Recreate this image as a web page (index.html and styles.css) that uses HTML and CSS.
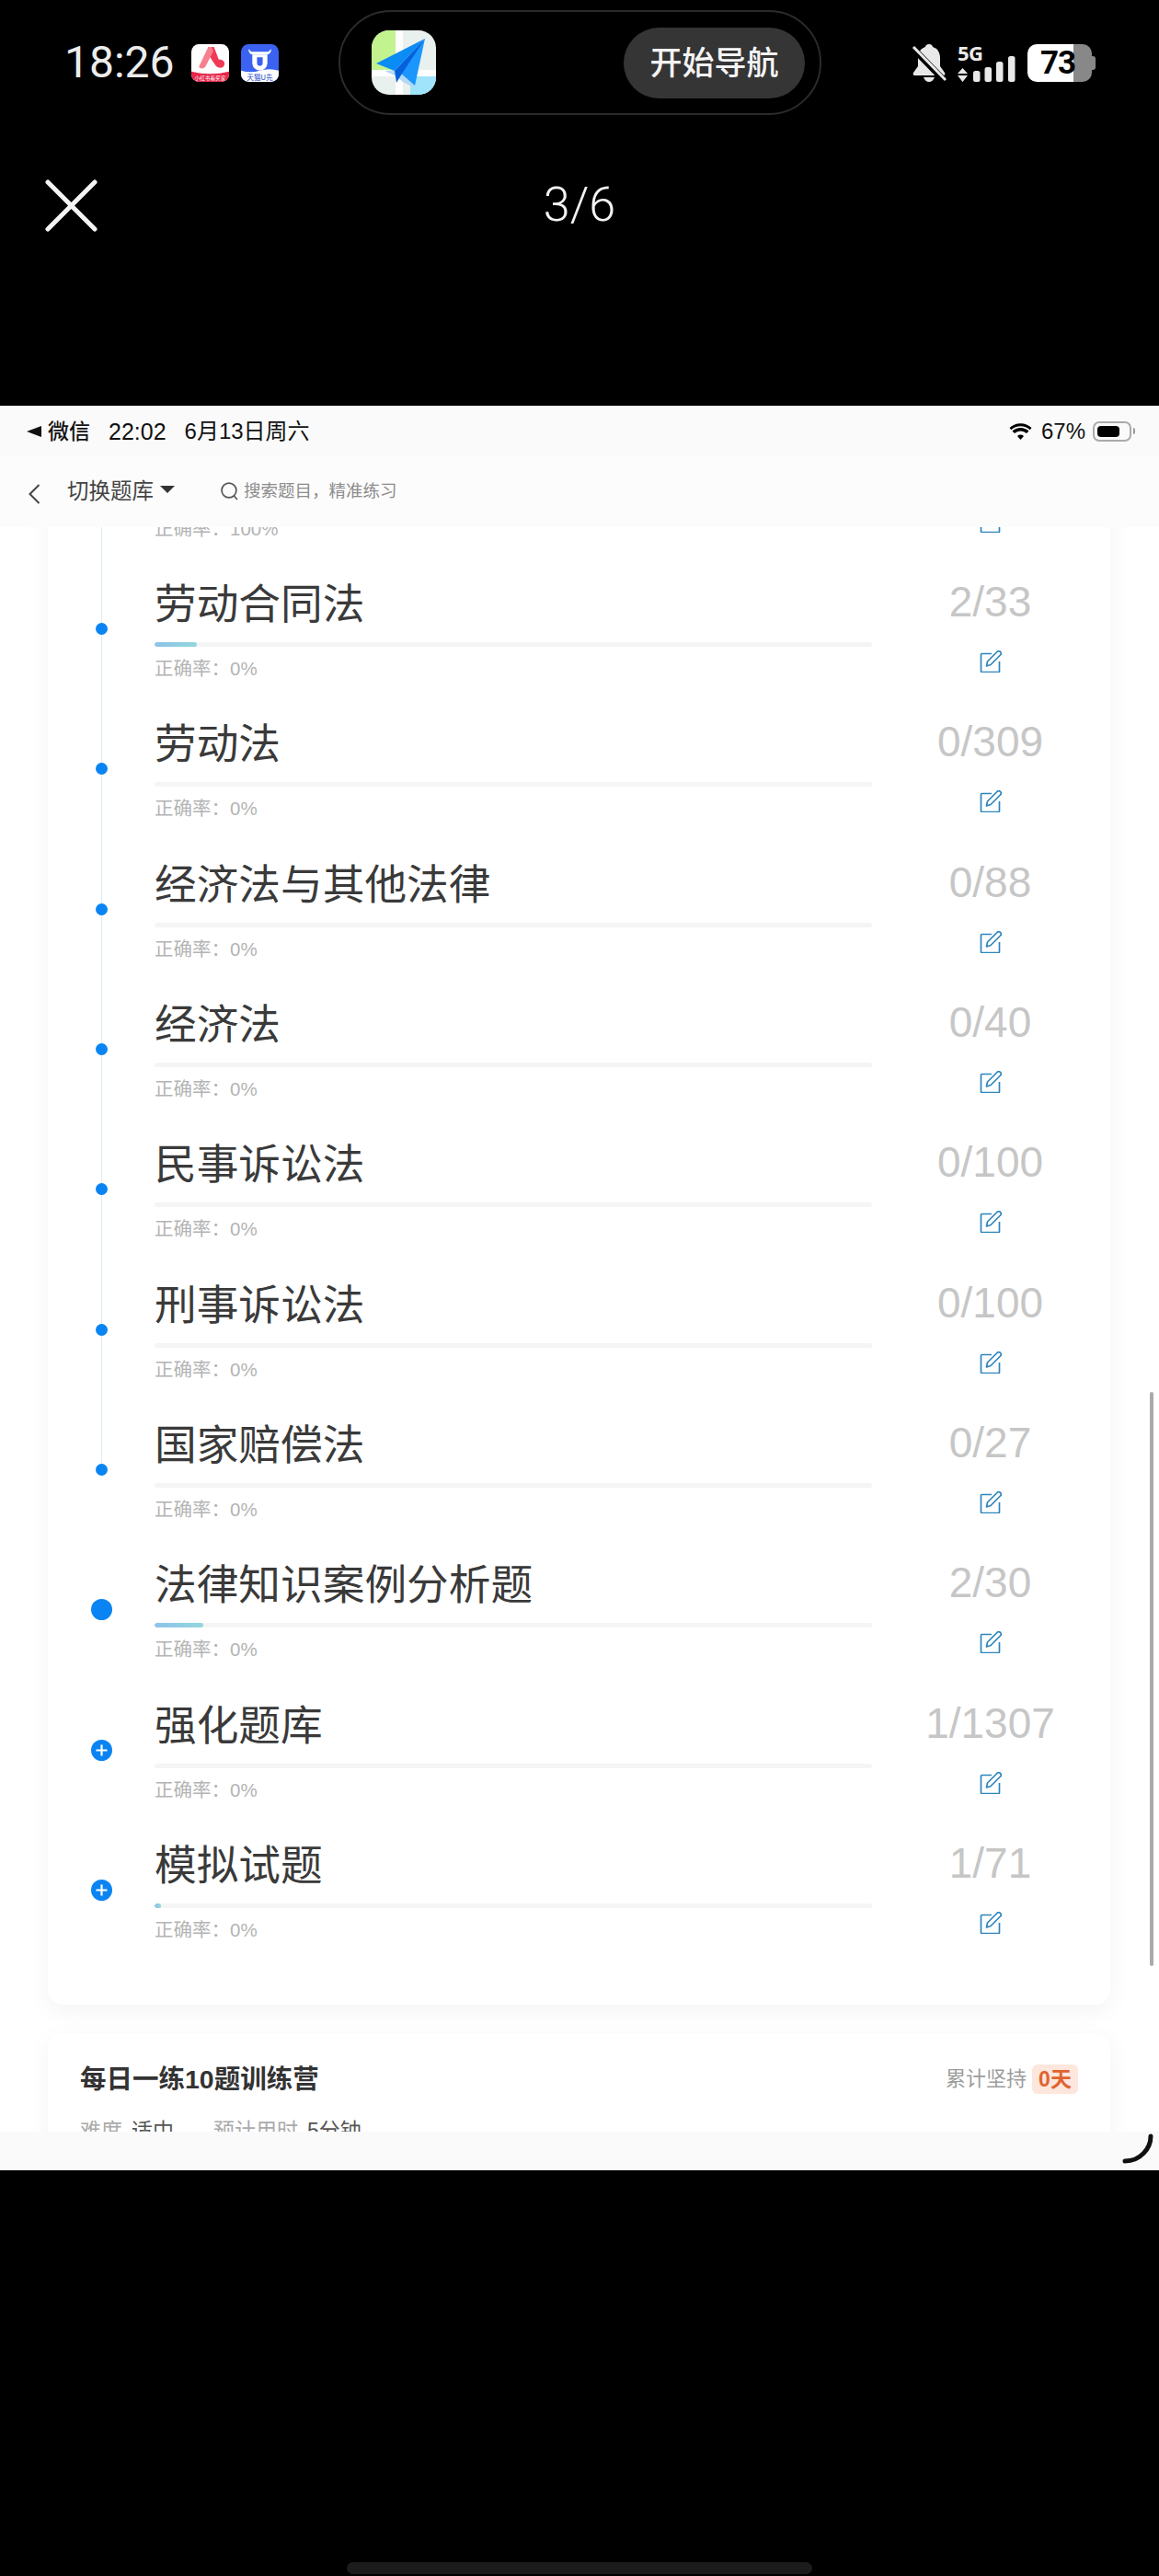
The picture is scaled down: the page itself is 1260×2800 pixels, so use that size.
FILE: index.html
```html
<!DOCTYPE html>
<html lang="zh-CN">
<head>
<meta charset="utf-8">
<title>题库</title>
<link rel="stylesheet" href="styles.css">
</head>
<body>
<svg class="defs" aria-hidden="true">
  <symbol id="i-edit" viewBox="0 0 24 24">
    <path d="M13 3.500H2.500a1 1 0 0 0-1 1v18a1 1 0 0 0 1 1h18a1 1 0 0 0 1-1V12" fill="none" stroke="#2f86bd" stroke-width="1.700"/>
    <path d="M7.500 17l1-5L19 1.500a2 2 0 0 1 3.500 3.500L12 15.500z" fill="none" stroke="#2f86bd" stroke-width="1.700" stroke-linejoin="round"/>
  </symbol>
  <symbol id="i-plus" viewBox="0 0 23 23">
    <circle cx="11.500" cy="11.500" r="11.500" fill="#0a84f2"/>
    <path d="M11.500 5.500v12M5.500 11.500h12" stroke="#fff" stroke-width="2.200"/>
  </symbol>
</svg>
<header class="top">
  <div class="status">
    <span class="clock">18:26</span>
    <svg class="app" viewBox="0 0 40 40"><rect width="40" height="40" rx="8" fill="#fff"/><path d="M0 29q20 5 40 0v3a8 8 0 0 1-8 8H8a8 8 0 0 1-8-8z" fill="#e8274b"/><path d="M18 3h6l5 13c5 0 7 3 6 6-1 4-6 4-9 1l-4-6-5-8z" fill="#f03a55"/><path d="M18 3 8 24c2 3 5 2 7 0l8-16-1-5z" fill="#f7808e"/><text x="20" y="38" class="app-label" text-anchor="middle">小红书看买家</text></svg>
    <svg class="app app-second" viewBox="0 0 40 40"><rect width="40" height="40" rx="8" fill="#3b62f0"/><path d="M0 28q10 3 20 0t20 0v4a8 8 0 0 1-8 8H8a8 8 0 0 1-8-8z" fill="#fff"/><path d="M8 5c0 4 2 6 5 6h14c3 0 5-2 5-6l-3 3H11z" fill="#fff"/><path d="M12 11h16v9a8 8 0 0 1-16 0zm5 3v6a3 3 0 0 0 6 0v-6z" fill="#fff" fill-rule="evenodd"/><text x="20" y="38" class="app-label app-label-blue" text-anchor="middle">天猫U先</text></svg>
    <div class="island">
      <svg class="map" viewBox="0 0 70 70">
        <defs><clipPath id="sq"><rect width="70" height="70" rx="19"/></clipPath></defs>
        <g clip-path="url(#sq)">
          <rect width="70" height="70" fill="#e9f1ef"/>
          <rect width="26" height="43" fill="#c3f38f"/>
          <rect x="42" y="46" width="28" height="24" fill="#9fe4fb"/>
          <rect x="26" width="8" height="70" fill="#fff"/>
          <rect y="43" width="70" height="7" fill="#fff"/>
          <path d="M14 44 40 42 47 63 34 56 27 50z" fill="#b4d8f5"/>
          <path d="M58 9 5 36 25 44z" fill="#0b8cf5"/>
          <path d="M58 9 31 46 47 60z" fill="#1a96fd"/>
          <path d="M58 9 25 44 27 57 33 47z" fill="#0560dc"/>
        </g>
      </svg>
      <span class="nav-btn">开始导航</span>
    </div>
    <div class="indicators">
      <svg class="bell" viewBox="0 0 38 41"><path d="M19 0c2.500 0 4 1.500 4 3 5 1.500 8 6 8 12v9l5 7c.8 1.500 0 3-1.500 3h-31C2 34 1.200 32.500 2 31l5-7v-9c0-6 3-10.500 8-12 0-1.500 1.500-3 4-3zM13 36h12c-1 3-3.500 5-6 5s-5-2-6-5z" fill="#e9e9e9"/><path d="M1 4 36 40" stroke="#000" stroke-width="7"/><path d="M2 3 37 39" stroke="#e9e9e9" stroke-width="3"/></svg>
      <div class="net">
        <span class="net-label">5G</span>
        <svg class="signal" viewBox="0 0 63 28"><path d="M5.500 13 11 19H0zM5.500 28 0 21h11z" fill="#e9e9e9"/><rect x="17" y="16" width="7.500" height="12" rx="2.500" fill="#e9e9e9"/><rect x="29.500" y="12" width="7.500" height="16" rx="2.500" fill="#e9e9e9"/><rect x="42" y="6" width="7.500" height="22" rx="2.500" fill="#e9e9e9"/><rect x="55" y="0" width="7.500" height="28" rx="2.500" fill="#e9e9e9"/></svg>
      </div>
      <div class="battery"><span class="battery-num">73</span></div>
    </div>
  </div>
  <div class="viewer">
    <svg class="close" viewBox="0 0 57 57"><path d="M3 3 54 54M54 3 3 54" stroke="#f4f4f4" stroke-width="5" stroke-linecap="round"/></svg>
    <span class="pager">3/6</span>
  </div>
</header>

<main class="screen">
  <div class="sys">
    <span class="back-tri"></span>
    <span class="sys-text sys-app">微信</span>
    <span class="sys-text sys-time">22:02</span>
    <span class="sys-text sys-date">6月13日周六</span>
    <svg class="wifi" viewBox="0 0 24 18"><path d="M12 18 8.500 14a5 5 0 0 1 7 0zM5.500 11 3 8.500a13 13 0 0 1 18 0L18.500 11a9.500 9.500 0 0 0-13 0zM1.800 7.200 0 5a17.500 17.500 0 0 1 24 0l-1.800 2.200a15 15 0 0 0-20.400 0z" fill="#000"/></svg>
    <span class="sys-text sys-pct">67%</span>
    <span class="sys-batt"><span class="sys-batt-fill"></span></span>
    <span class="sys-nub"></span>
  </div>
  <nav class="nav">
    <svg class="chev" viewBox="0 0 13 22"><path d="M11.500 1 1.500 11l10 10" fill="none" stroke="#444" stroke-width="2"/></svg>
    <span class="bank">切换题库</span>
    <span class="bank-tri"></span>
    <svg class="search" viewBox="0 0 19 19"><circle cx="8.500" cy="8.500" r="7.500" fill="none" stroke="#555" stroke-width="1.600"/><path d="M13.500 14 17 18" stroke="#555" stroke-width="1.600"/></svg>
    <span class="search-text">搜索题目，精准练习</span>
  </nav>

  <div class="scroll">
    <div class="scroll-inner">
      <section class="card">
        <div class="row">
          <div class="axis line"><span class="dot"></span></div>
          <div class="main"><h3 class="title">合同法</h3><div class="track"></div><p class="rate">正确率：100%</p></div>
          <div class="side"><span class="count">1/1</span><svg class="edit"><use href="#i-edit"/></svg></div>
        </div>
        <div class="row">
          <div class="axis line"><span class="dot"></span></div>
          <div class="main"><h3 class="title">劳动合同法</h3><div class="track"><div class="fill" style="width:46px"></div></div><p class="rate">正确率：0%</p></div>
          <div class="side"><span class="count">2/33</span><svg class="edit"><use href="#i-edit"/></svg></div>
        </div>
        <div class="row">
          <div class="axis line"><span class="dot"></span></div>
          <div class="main"><h3 class="title">劳动法</h3><div class="track"></div><p class="rate">正确率：0%</p></div>
          <div class="side"><span class="count">0/309</span><svg class="edit"><use href="#i-edit"/></svg></div>
        </div>
        <div class="row">
          <div class="axis line"><span class="dot"></span></div>
          <div class="main"><h3 class="title">经济法与其他法律</h3><div class="track"></div><p class="rate">正确率：0%</p></div>
          <div class="side"><span class="count">0/88</span><svg class="edit"><use href="#i-edit"/></svg></div>
        </div>
        <div class="row">
          <div class="axis line"><span class="dot"></span></div>
          <div class="main"><h3 class="title">经济法</h3><div class="track"></div><p class="rate">正确率：0%</p></div>
          <div class="side"><span class="count">0/40</span><svg class="edit"><use href="#i-edit"/></svg></div>
        </div>
        <div class="row">
          <div class="axis line"><span class="dot"></span></div>
          <div class="main"><h3 class="title">民事诉讼法</h3><div class="track"></div><p class="rate">正确率：0%</p></div>
          <div class="side"><span class="count">0/100</span><svg class="edit"><use href="#i-edit"/></svg></div>
        </div>
        <div class="row">
          <div class="axis line"><span class="dot"></span></div>
          <div class="main"><h3 class="title">刑事诉讼法</h3><div class="track"></div><p class="rate">正确率：0%</p></div>
          <div class="side"><span class="count">0/100</span><svg class="edit"><use href="#i-edit"/></svg></div>
        </div>
        <div class="row">
          <div class="axis line-end"><span class="dot"></span></div>
          <div class="main"><h3 class="title">国家赔偿法</h3><div class="track"></div><p class="rate">正确率：0%</p></div>
          <div class="side"><span class="count">0/27</span><svg class="edit"><use href="#i-edit"/></svg></div>
        </div>
        <div class="row">
          <div class="axis"><span class="dot dot-big"></span></div>
          <div class="main"><h3 class="title">法律知识案例分析题</h3><div class="track"><div class="fill" style="width:53px"></div></div><p class="rate">正确率：0%</p></div>
          <div class="side"><span class="count">2/30</span><svg class="edit"><use href="#i-edit"/></svg></div>
        </div>
        <div class="row">
          <div class="axis"><svg class="plus"><use href="#i-plus"/></svg></div>
          <div class="main"><h3 class="title">强化题库</h3><div class="track"></div><p class="rate">正确率：0%</p></div>
          <div class="side"><span class="count">1/1307</span><svg class="edit"><use href="#i-edit"/></svg></div>
        </div>
        <div class="row">
          <div class="axis"><svg class="plus"><use href="#i-plus"/></svg></div>
          <div class="main"><h3 class="title">模拟试题</h3><div class="track"><div class="fill" style="width:7px"></div></div><p class="rate">正确率：0%</p></div>
          <div class="side"><span class="count">1/71</span><svg class="edit"><use href="#i-edit"/></svg></div>
        </div>
      </section>
      <section class="card camp">
        <div class="camp-head">
          <h2 class="camp-title">每日一练10题训练营</h2>
          <span class="streak">累计坚持</span>
          <span class="badge">0天</span>
        </div>
        <div class="camp-meta">
          <span class="meta-key">难度</span><span class="meta-val">适中</span>
          <span class="meta-key meta-gap">预计用时</span><span class="meta-val">5分钟</span>
        </div>
      </section>
    </div>
  </div>
  <div class="tabbar"></div>
  <div class="scrollbar"></div>
  <svg class="corner" viewBox="0 0 34 34"><path d="M31 3c0 13-11 27-28 27" fill="none" stroke="#111" stroke-width="5" stroke-linecap="round"/></svg>
</main>

<footer class="foot"><div class="home"></div></footer>
</body>
</html>
```

FILE: styles.css
```css
* { box-sizing: border-box; }
html, body { margin: 0; padding: 0; }
body {
  width: 1260px;
  height: 2800px;
  overflow: hidden;
  background: #000;
  display: flex;
  flex-direction: column;
  font-family: "Liberation Sans", "Noto Sans CJK SC", sans-serif;
}
.defs { width: 0; height: 0; position: absolute; }

/* phone top */
.top { height: 441px; flex: none; padding-top: 11px; }
.status {
  display: flex;
  align-items: center;
  height: 114px;
  padding-left: 70px;
}
.clock {
  width: 119px;
  margin-right: 19px;
  font: 400 48px/1 Roboto, sans-serif;
  color: #ececec;
  white-space: nowrap;
}
.app { width: 41px; height: 41px; flex: none; }
.app-second { margin-left: 13px; }
.app-label { font: 5.500px "Noto Sans CJK SC", sans-serif; fill: #fff; }
.app-label-blue { font-size: 7.500px; fill: #2346c8; }
.island {
  width: 525px;
  height: 114px;
  margin-left: 65px;
  padding: 0 16px 0 34px;
  border: 2px solid #2b2b2b;
  border-radius: 57px;
  display: flex;
  align-items: center;
  justify-content: space-between;
}
.map { width: 70px; height: 70px; }
.nav-btn {
  width: 197px;
  height: 77px;
  border-radius: 39px;
  background: #353535;
  color: #f4f4f4;
  font: 500 35px/72px "Noto Sans CJK SC", sans-serif;
  text-align: center;
}
.indicators {
  display: flex;
  align-items: center;
  margin-left: 98px;
}
.bell { width: 38px; height: 41px; }
.net {
  width: 63px;
  height: 41px;
  margin-left: 12px;
  position: relative;
}
.net-label {
  position: absolute;
  left: 0;
  top: 0;
  font: 700 22px/18px "Open Sans", sans-serif;
  letter-spacing: -.5px;
  color: #e9e9e9;
}
.signal { position: absolute; left: 0; bottom: 0; width: 63px; height: 28px; }
.battery {
  width: 70px;
  height: 41px;
  margin-left: 13px;
  border-radius: 10px;
  background: linear-gradient(90deg, #fff 0 50px, #888 50px);
  position: relative;
}
.battery::after {
  content: "";
  position: absolute;
  right: -4px;
  top: 13px;
  width: 4px;
  height: 15px;
  border-radius: 0 3px 3px 0;
  background: #888;
}
.battery-num {
  position: absolute;
  left: 14px;
  top: 0;
  font: 700 35px/41px Roboto, sans-serif;
  letter-spacing: -1px;
  color: #000;
}
.viewer {
  display: grid;
  grid-template-columns: 1fr auto 1fr;
  align-items: center;
  height: 57px;
  margin-top: 70px;
  padding: 0 49px;
}
.close { width: 57px; height: 57px; }
.pager {
  font: 300 52px/57px Roboto, sans-serif;
  color: #f4f4f4;
  position: relative;
  top: -1px;
}

/* embedded screenshot */
.screen {
  height: 1918px;
  flex: none;
  background: #fff;
  position: relative;
  display: flex;
  flex-direction: column;
  overflow: hidden;
}
.sys {
  height: 54px;
  flex: none;
  background: #fafafa;
  display: flex;
  align-items: center;
  padding-left: 29px;
  padding-top: 1px;
}
.back-tri {
  width: 0;
  height: 0;
  border-style: solid;
  border-width: 6px 16px 6px 0;
  border-color: transparent #111 transparent transparent;
}
.sys-text { font-size: 24px; line-height: 28px; color: #111; white-space: nowrap; }
.sys-app { font-size: 23px; margin-left: 7px; font-weight: 500; }
.sys-time { font-size: 25px; margin-left: 20px; }
.sys-date { margin-left: 20px; }
.wifi { width: 25px; height: 18px; margin-left: auto; }
.sys-pct { font-size: 24px; margin-left: 10px; }
.sys-batt {
  width: 42px;
  height: 22px;
  margin-left: 8px;
  padding: 3px;
  border: 2px solid #aaa;
  border-radius: 7px;
  display: block;
}
.sys-batt-fill { display: block; width: 24px; height: 100%; border-radius: 4px; background: #000; }
.sys-nub { width: 2px; height: 7px; margin-left: 2px; margin-right: 26px; background: #999; border-radius: 0 2px 2px 0; }
.nav {
  height: 78px;
  flex: none;
  background: #fcfcfc;
  display: flex;
  align-items: center;
  padding: 0 0 0 31px;
}
.chev { width: 13px; height: 22px; margin-top: 6px; }
.bank { margin-left: 29px; font-size: 23.500px; line-height: 30px; color: #444; white-space: nowrap; }
.bank-tri {
  width: 0;
  height: 0;
  margin-left: 7px;
  margin-bottom: 4px;
  border-style: solid;
  border-width: 8px 8px 0;
  border-color: #333 transparent transparent;
}
.search { width: 20px; height: 20px; margin-left: 50px; }
.search-text { margin-left: 5px; font-size: 18.500px; line-height: 24px; color: #8c8c8c; white-space: nowrap; }

.scroll { flex: 1; min-height: 0; overflow: hidden; background: #fff; }
.scroll-inner { margin-top: -114.330px; padding-left: 52px; }
.card {
  width: 1155px;
  background: #fff;
  border-radius: 0 0 16px 16px;
  box-shadow: 0 6px 26px rgba(0, 0, 0, .05);
  padding-bottom: 45px;
}
.row { display: flex; height: 152.330px; }
.axis {
  width: 116px;
  flex: none;
  position: relative;
  display: flex;
  justify-content: center;
  align-items: flex-start;
}
.line::before, .line-end::before {
  content: "";
  position: absolute;
  left: 58px;
  top: 0;
  bottom: 0;
  width: 1px;
  background: #dcecf6;
}
.line-end::before { bottom: 80px; }
.dot {
  width: 13px;
  height: 13px;
  margin-top: 66px;
  border-radius: 50%;
  background: #0a84f2;
  position: relative;
}
.dot-big { width: 23px; height: 23px; margin-top: 61px; }
.plus { width: 23px; height: 23px; margin-top: 61px; }
.main { width: 780px; flex: none; padding-top: 17px; }
.title { margin: 0; font-weight: 400; font-size: 45.700px; line-height: 60px; color: #3a3a3a; white-space: nowrap; }
.track { height: 5px; margin-top: 10px; border-radius: 3px; background: #f5f5f5; overflow: hidden; }
.fill { height: 100%; border-radius: 3px; background: linear-gradient(90deg, #8dc3ea, #93d6dd); }
.rate { margin: 9px 0 0; font-size: 20.500px; line-height: 30px; color: #b4b4b4; }
.side { flex: 1; display: flex; flex-direction: column; align-items: center; padding: 13px 2px 0 0; }
.count { font-size: 46px; line-height: 60px; color: #c6c6c6; white-space: nowrap; }
.edit { width: 24px; height: 24px; margin-top: 23px; }

.camp { margin-top: 31px; border-radius: 16px; padding: 34px 35px 20px 35px; height: 200px; }
.camp-head { display: flex; align-items: center; height: 32px; }
.camp-title { margin: 0 auto 0 0; font-size: 28.500px; line-height: 32px; font-weight: 700; color: #333; white-space: nowrap; }
.streak { font-size: 22px; line-height: 30px; color: #9c9c9c; }
.badge {
  width: 50px;
  height: 32px;
  margin-left: 6px;
  border-radius: 6px;
  background: #fde6dc;
  color: #e0632f;
  font-size: 23px;
  font-weight: 700;
  line-height: 32px;
  text-align: center;
  white-space: nowrap;
}
.camp-meta { display: flex; margin-top: 28px; font-size: 23px; line-height: 24px; }
.meta-key { color: #aaa; }
.meta-val { color: #555; margin-left: 10px; }
.meta-gap { margin-left: 43px; }

.tabbar { height: 42px; flex: none; background: #fafafa; }
.scrollbar {
  position: absolute;
  right: 6px;
  top: 1072px;
  width: 4px;
  height: 624px;
  background: #aaa;
  border-radius: 2px;
}
.corner { position: absolute; left: 1220px; top: 1878px; width: 34px; height: 34px; }

.foot {
  flex: 1;
  display: flex;
  justify-content: center;
  align-items: flex-end;
  padding-bottom: 2px;
}
.home { width: 506px; height: 13px; border-radius: 7px; background: #1c1c1c; }
```
